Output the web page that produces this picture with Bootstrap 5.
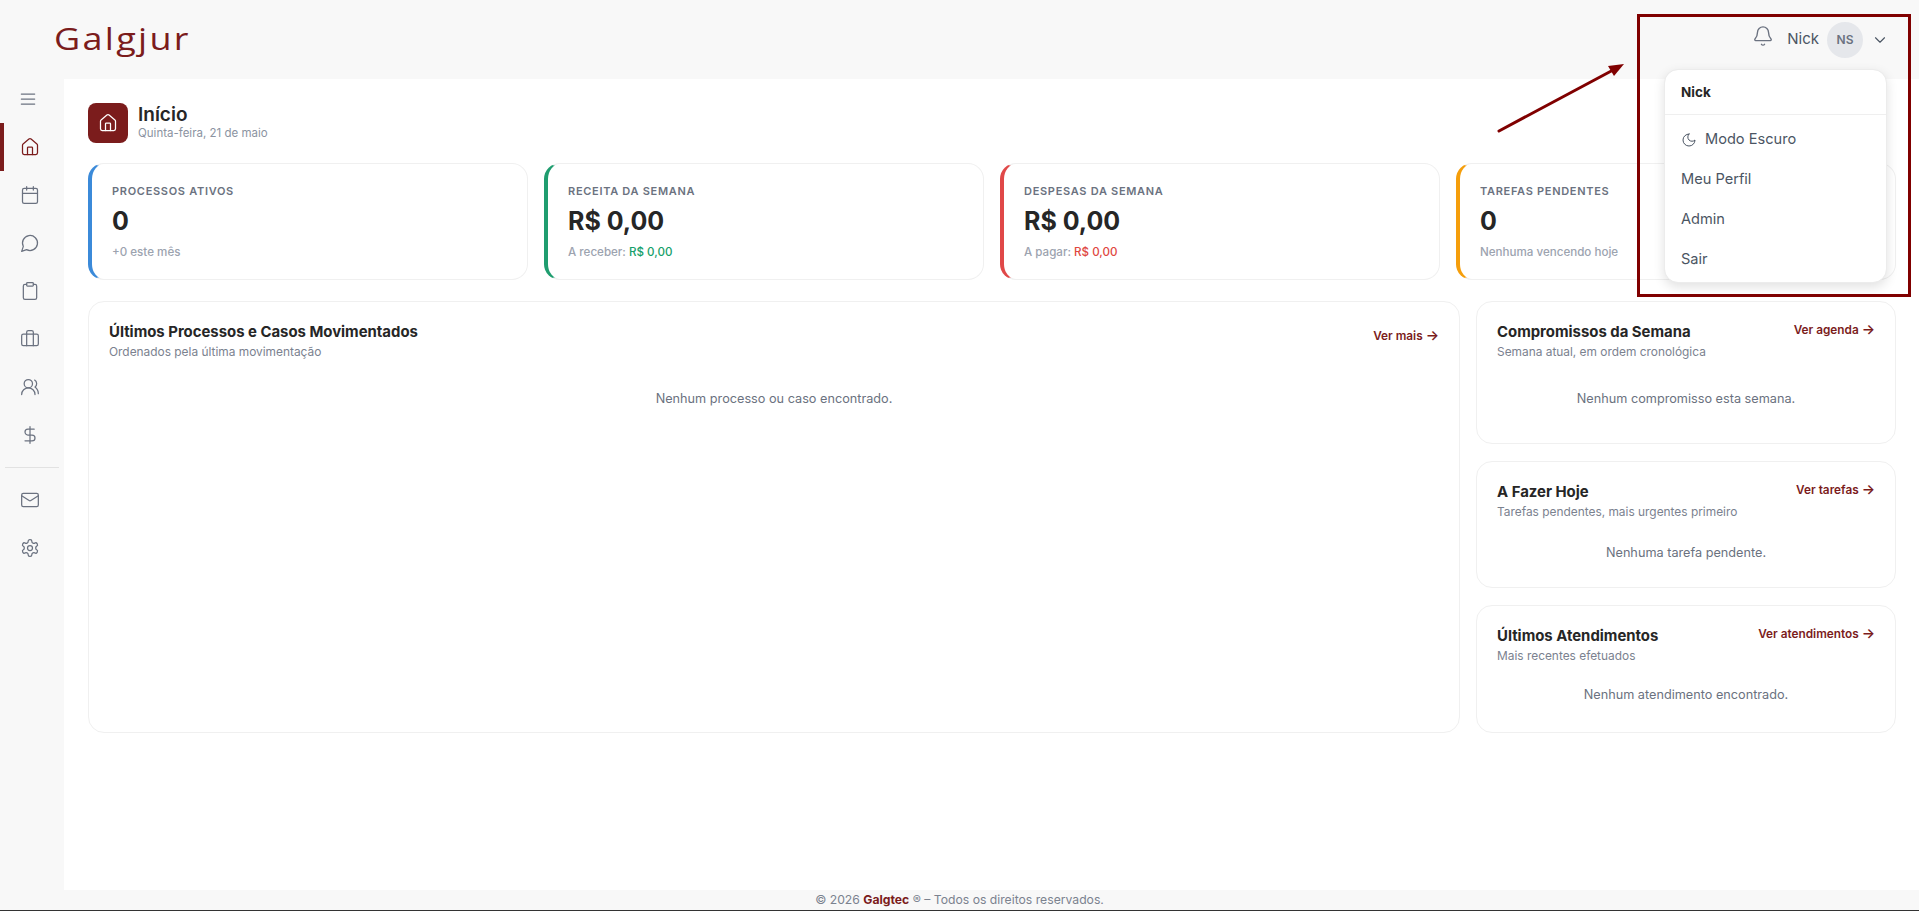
<!DOCTYPE html>
<html lang="pt-BR">
<head>
    <meta charset="UTF-8">
    <title>Galgjur</title>
    <link href="https://cdn.jsdelivr.net/npm/bootstrap@5.3.0/dist/css/bootstrap.min.css" rel="stylesheet">
    <style>
        html, body { height: 100%; }
        body {
            font-family: Inter, "Liberation Sans", sans-serif;
            background: #f8f8f8;
            color: #262626;
            overflow: hidden;
        }
        .ic { fill: none; stroke: currentColor; stroke-width: 1.5; stroke-linecap: round; stroke-linejoin: round; }
        .app-top { height: 79px; flex: none; padding-left: 54px; }
        .logo-word { font-family: "Open Sans", sans-serif; font-size: 31px; font-weight: 400; color: #7b1c1c; letter-spacing: 2px; line-height: 1; margin-top: -2px; transform: scaleX(1.16); transform-origin: left center; }
        .top-user { font-size: 15px; color: #4b5563; padding-right: 30px; }
        .top-bell { color: #6b7280; margin-right: 13px; margin-top: -8px; }
        .avatar-dot { width: 36px; height: 36px; background: #e5e7eb; color: #6b7280; font-size: 12px; font-weight: 600; margin: 0 8px 0 8px; }
        .app-side { width: 64px; flex: none; }
        .side-link { height: 48px; color: #6b7280; padding-right: 8px; border-left: 4px solid transparent; }
        .side-link.on { color: #7b1c1c; border-left-color: #7b1c1c; }
        .side-toggle { height: 40px; margin-bottom: 4px; padding-right: 12px; }
        .side-rule { margin: 8px 5px; border-top: 1px solid #e2e2e2; opacity: 1; }
        .app-main { background: #fff; padding: 24px 23px 0 24px; min-width: 0; }
        .head-tile { width: 40px; height: 40px; background: #7b1c1c; color: #fff; border-radius: 8px; margin-right: 2px; }
        .head-text { margin-bottom: 2px; }
        .head-title { font-size: 19px; font-weight: 600; line-height: 22px; color: #262626; }
        .head-date { font-size: 11.5px; line-height: 14px; color: #8b93a1; }
        .stat-grid { display: grid; grid-template-columns: repeat(4, 1fr); gap: 16px; margin: 20px 0 21px; }
        .stat-box { height: 117px; border: 1px solid #f0f0f0; border-left: 4px solid; border-radius: 16px; padding: 19px 20px; }
        .stat-label { font-size: 11px; font-weight: 600; letter-spacing: .7px; text-transform: uppercase; color: #6b7280; line-height: 16px; }
        .stat-num { font-size: 25px; font-weight: 700; line-height: 32px; margin-top: 6px; color: #262626; }
        .stat-note { font-size: 11.6px; font-weight: 500; color: #9ca3af; line-height: 16px; margin-top: 7px; }
        .panel-grid { display: grid; grid-template-columns: 1fr 420px; gap: 16px; }
        .panel-box { border: 1px solid #f0f0f0; border-radius: 16px; padding: 20px 20px; }
        .panel-title { font-size: 14.9px; font-weight: 700; line-height: 20px; color: #262626; }
        .panel-sub { font-size: 11.9px; line-height: 16px; color: #7b828f; margin-top: 2px; }
        .panel-link { font-size: 11.8px; font-weight: 600; color: #7b1c1c; text-decoration: none; white-space: nowrap; }
        .panel-link.low { margin-top: 6px; }
        .link-arrow { font-size: 14px; line-height: 1; }
        .panel-stack { gap: 17px; }
        .panel-msg { font-size: 12.7px; line-height: 20px; color: #6b7280; text-align: center; }
        .msg-a { padding: 29px 0 14px; }
        .msg-b { padding: 23px 0 4px; }
        .msg-c { padding: 21px 0 7px; }
        .app-foot { height: 21px; flex: none; font-size: 12.2px; line-height: 20px; color: #7b828f; border-bottom: 1px solid #333; text-align: center; }
        .app-foot b { color: #7b1c1c; font-weight: 700; }
        .user-menu { display: block; position: absolute; left: 1664px; top: 69px; width: 223px; height: 214px; padding: 0; border: 1px solid #ececec; border-radius: 14px; box-shadow: 0 4px 12px rgba(0,0,0,.12); font-size: 14.6px; }
        .user-menu .dropdown-header { font-size: 13.5px; font-weight: 700; color: #262626; padding: 0 16px; height: 44px; line-height: 44px; }
        .user-menu .dropdown-divider { margin: 0 0 5px; border-color: #efefef; opacity: 1; }
        .user-menu .dropdown-item { height: 40px; padding: 0 16px; color: #4b5563; display: flex; align-items: center; gap: 8px; }
        .note-frame { position: absolute; left: 1637px; top: 14px; width: 274px; height: 283px; border: 3px solid #800000; pointer-events: none; }
        .note-arrow { position: absolute; left: 1490px; top: 55px; pointer-events: none; }
    </style>
</head>
<body class="d-flex flex-column">
    <svg width="0" height="0" class="position-absolute">
        <symbol id="i-house" viewBox="0 0 24 24"><path d="M15 21v-8a1 1 0 0 0-1-1h-4a1 1 0 0 0-1 1v8"/><path d="M3 10a2 2 0 0 1 .709-1.528l7-5.999a2 2 0 0 1 2.582 0l7 5.999A2 2 0 0 1 21 10v9a2 2 0 0 1-2 2H5a2 2 0 0 1-2-2z"/></symbol>
        <symbol id="i-menu" viewBox="0 0 24 24"><path d="M4 6h16M4 12h16M4 18h16"/></symbol>
        <symbol id="i-cal" viewBox="0 0 24 24"><path d="M8 2v4M16 2v4M3 10h18"/><rect x="3" y="4" width="18" height="18" rx="2"/></symbol>
        <symbol id="i-chat" viewBox="0 0 24 24"><path d="M7.9 20A9 9 0 1 0 4 16.1L2 22Z"/></symbol>
        <symbol id="i-clip" viewBox="0 0 24 24"><rect x="8" y="2" width="8" height="4" rx="1"/><path d="M16 4h2a2 2 0 0 1 2 2v14a2 2 0 0 1-2 2H6a2 2 0 0 1-2-2V6a2 2 0 0 1 2-2h2"/></symbol>
        <symbol id="i-case" viewBox="0 0 24 24"><path d="M16 20V4a2 2 0 0 0-2-2h-4a2 2 0 0 0-2 2v16"/><rect x="2" y="6" width="20" height="14" rx="2"/></symbol>
        <symbol id="i-users" viewBox="0 0 24 24"><path d="M18 21a8 8 0 0 0-16 0"/><circle cx="10" cy="8" r="5"/><path d="M22 20c0-3.37-2-6.5-4-8a5 5 0 0 0-.45-8.3"/></symbol>
        <symbol id="i-dollar" viewBox="0 0 24 24"><path d="M12 2v20M17 5H9.5a3.5 3.5 0 0 0 0 7h5a3.5 3.5 0 0 1 0 7H6"/></symbol>
        <symbol id="i-mail" viewBox="0 0 24 24"><rect x="2" y="4" width="20" height="16" rx="2"/><path d="m22 7-8.97 5.7a1.94 1.94 0 0 1-2.06 0L2 7"/></symbol>
        <symbol id="i-gear" viewBox="0 0 24 24"><path d="M12.22 2h-.44a2 2 0 0 0-2 2v.18a2 2 0 0 1-1 1.73l-.43.25a2 2 0 0 1-2 0l-.15-.08a2 2 0 0 0-2.73.73l-.22.38a2 2 0 0 0 .73 2.73l.15.1a2 2 0 0 1 1 1.72v.51a2 2 0 0 1-1 1.74l-.15.09a2 2 0 0 0-.73 2.73l.22.38a2 2 0 0 0 2.73.73l.15-.08a2 2 0 0 1 2 0l.43.25a2 2 0 0 1 1 1.73V20a2 2 0 0 0 2 2h.44a2 2 0 0 0 2-2v-.18a2 2 0 0 1 1-1.73l.43-.25a2 2 0 0 1 2 0l.15.08a2 2 0 0 0 2.73-.73l.22-.39a2 2 0 0 0-.73-2.73l-.15-.08a2 2 0 0 1-1-1.74v-.5a2 2 0 0 1 1-1.74l.15-.09a2 2 0 0 0 .73-2.73l-.22-.38a2 2 0 0 0-2.73-.73l-.15.08a2 2 0 0 1-2 0l-.43-.25a2 2 0 0 1-1-1.73V4a2 2 0 0 0-2-2z"/><circle cx="12" cy="12" r="3"/></symbol>
        <symbol id="i-bell" viewBox="0 0 24 24"><path d="M10.268 21a2 2 0 0 0 3.464 0"/><path d="M3.262 15.326A1 1 0 0 0 4 17h16a1 1 0 0 0 .74-1.673C19.41 13.956 18 12.499 18 8A6 6 0 0 0 6 8c0 4.499-1.411 5.956-2.738 7.326"/></symbol>
        <symbol id="i-moon" viewBox="0 0 24 24"><path d="M12 3a6 6 0 0 0 9 9 9 9 0 1 1-9-9Z"/></symbol>
        <symbol id="i-chev" viewBox="0 0 24 24"><path d="m6 9 6 6 6-6"/></symbol>
    </svg>

    <!-- Topbar -->
    <header class="app-top d-flex align-items-center justify-content-between">
        <div class="logo-word">Galgjur</div>
        <div class="top-user d-flex align-items-center">
            <svg class="ic top-bell" width="22" height="22"><use href="#i-bell"/></svg>
            <span>Nick</span>
            <span class="avatar-dot rounded-circle d-flex align-items-center justify-content-center">NS</span>
            <svg class="ic" width="18" height="18"><use href="#i-chev"/></svg>
        </div>
    </header>

    <div class="d-flex flex-grow-1" style="min-height:0">
        <!-- Sidebar -->
        <nav class="app-side">
            <a class="side-link side-toggle d-flex align-items-center justify-content-center" href="#"><svg class="ic" width="20" height="20"><use href="#i-menu"/></svg></a>
            <a class="side-link on d-flex align-items-center justify-content-center" href="#"><svg class="ic" width="20" height="20"><use href="#i-house"/></svg></a>
            <a class="side-link d-flex align-items-center justify-content-center" href="#"><svg class="ic" width="20" height="20"><use href="#i-cal"/></svg></a>
            <a class="side-link d-flex align-items-center justify-content-center" href="#"><svg class="ic" width="20" height="20"><use href="#i-chat"/></svg></a>
            <a class="side-link d-flex align-items-center justify-content-center" href="#"><svg class="ic" width="20" height="20"><use href="#i-clip"/></svg></a>
            <a class="side-link d-flex align-items-center justify-content-center" href="#"><svg class="ic" width="20" height="20"><use href="#i-case"/></svg></a>
            <a class="side-link d-flex align-items-center justify-content-center" href="#"><svg class="ic" width="20" height="20"><use href="#i-users"/></svg></a>
            <a class="side-link d-flex align-items-center justify-content-center" href="#"><svg class="ic" width="20" height="20"><use href="#i-dollar"/></svg></a>
            <hr class="side-rule">
            <a class="side-link d-flex align-items-center justify-content-center" href="#"><svg class="ic" width="20" height="20"><use href="#i-mail"/></svg></a>
            <a class="side-link d-flex align-items-center justify-content-center" href="#"><svg class="ic" width="20" height="20"><use href="#i-gear"/></svg></a>
        </nav>

        <!-- Content -->
        <main class="app-main flex-grow-1">
            <div class="d-flex align-items-center gap-2">
                <span class="head-tile d-flex align-items-center justify-content-center"><svg class="ic" width="20" height="20"><use href="#i-house"/></svg></span>
                <div class="head-text">
                    <div class="head-title">Início</div>
                    <div class="head-date">Quinta-feira, 21 de maio</div>
                </div>
            </div>

            <div class="stat-grid">
                <div class="stat-box" style="border-left-color:#3b8ad9">
                    <div class="stat-label">Processos Ativos</div>
                    <div class="stat-num">0</div>
                    <div class="stat-note">+0 este mês</div>
                </div>
                <div class="stat-box" style="border-left-color:#1f9d6f">
                    <div class="stat-label">Receita da Semana</div>
                    <div class="stat-num">R$ 0,00</div>
                    <div class="stat-note">A receber: <span style="color:#16a06a">R$ 0,00</span></div>
                </div>
                <div class="stat-box" style="border-left-color:#e04848">
                    <div class="stat-label">Despesas da Semana</div>
                    <div class="stat-num">R$ 0,00</div>
                    <div class="stat-note">A pagar: <span style="color:#e0483f">R$ 0,00</span></div>
                </div>
                <div class="stat-box" style="border-left-color:#f59e0b">
                    <div class="stat-label">Tarefas Pendentes</div>
                    <div class="stat-num">0</div>
                    <div class="stat-note">Nenhuma vencendo hoje</div>
                </div>
            </div>

            <div class="panel-grid">
                <section class="panel-box">
                    <div class="d-flex justify-content-between align-items-start">
                        <div>
                            <div class="panel-title">Últimos Processos e Casos Movimentados</div>
                            <div class="panel-sub">Ordenados pela última movimentação</div>
                        </div>
                        <a class="panel-link low" href="#">Ver mais <span class="link-arrow">→</span></a>
                    </div>
                    <div class="panel-msg msg-a">Nenhum processo ou caso encontrado.</div>
                </section>
                <div class="panel-stack d-flex flex-column">
                    <section class="panel-box">
                        <div class="d-flex justify-content-between align-items-start">
                            <div>
                                <div class="panel-title">Compromissos da Semana</div>
                                <div class="panel-sub">Semana atual, em ordem cronológica</div>
                            </div>
                            <a class="panel-link" href="#">Ver agenda <span class="link-arrow">→</span></a>
                        </div>
                        <div class="panel-msg msg-a">Nenhum compromisso esta semana.</div>
                    </section>
                    <section class="panel-box">
                        <div class="d-flex justify-content-between align-items-start">
                            <div>
                                <div class="panel-title">A Fazer Hoje</div>
                                <div class="panel-sub">Tarefas pendentes, mais urgentes primeiro</div>
                            </div>
                            <a class="panel-link" href="#">Ver tarefas <span class="link-arrow">→</span></a>
                        </div>
                        <div class="panel-msg msg-b">Nenhuma tarefa pendente.</div>
                    </section>
                    <section class="panel-box">
                        <div class="d-flex justify-content-between align-items-start">
                            <div>
                                <div class="panel-title">Últimos Atendimentos</div>
                                <div class="panel-sub">Mais recentes efetuados</div>
                            </div>
                            <a class="panel-link" href="#">Ver atendimentos <span class="link-arrow">→</span></a>
                        </div>
                        <div class="panel-msg msg-c">Nenhum atendimento encontrado.</div>
                    </section>
                </div>
            </div>
        </main>
    </div>

    <footer class="app-foot">© 2026 <b>Galgtec</b> ® – Todos os direitos reservados.</footer>

    <!-- User menu -->
    <div class="dropdown-menu user-menu">
        <div class="dropdown-header">Nick</div>
        <hr class="dropdown-divider">
        <a class="dropdown-item" href="#"><svg class="ic" width="16" height="16"><use href="#i-moon"/></svg>Modo Escuro</a>
        <a class="dropdown-item" href="#">Meu Perfil</a>
        <a class="dropdown-item" href="#">Admin</a>
        <a class="dropdown-item" href="#">Sair</a>
    </div>

    <!-- Annotation -->
    <div class="note-frame"></div>
    <svg class="note-arrow" width="150" height="90">
        <line x1="9" y1="76" x2="125" y2="14" stroke="#800000" stroke-width="3" stroke-linecap="round"/>
        <polygon points="134,9 118,11 124,21" fill="#800000"/>
    </svg>
</body>
</html>
